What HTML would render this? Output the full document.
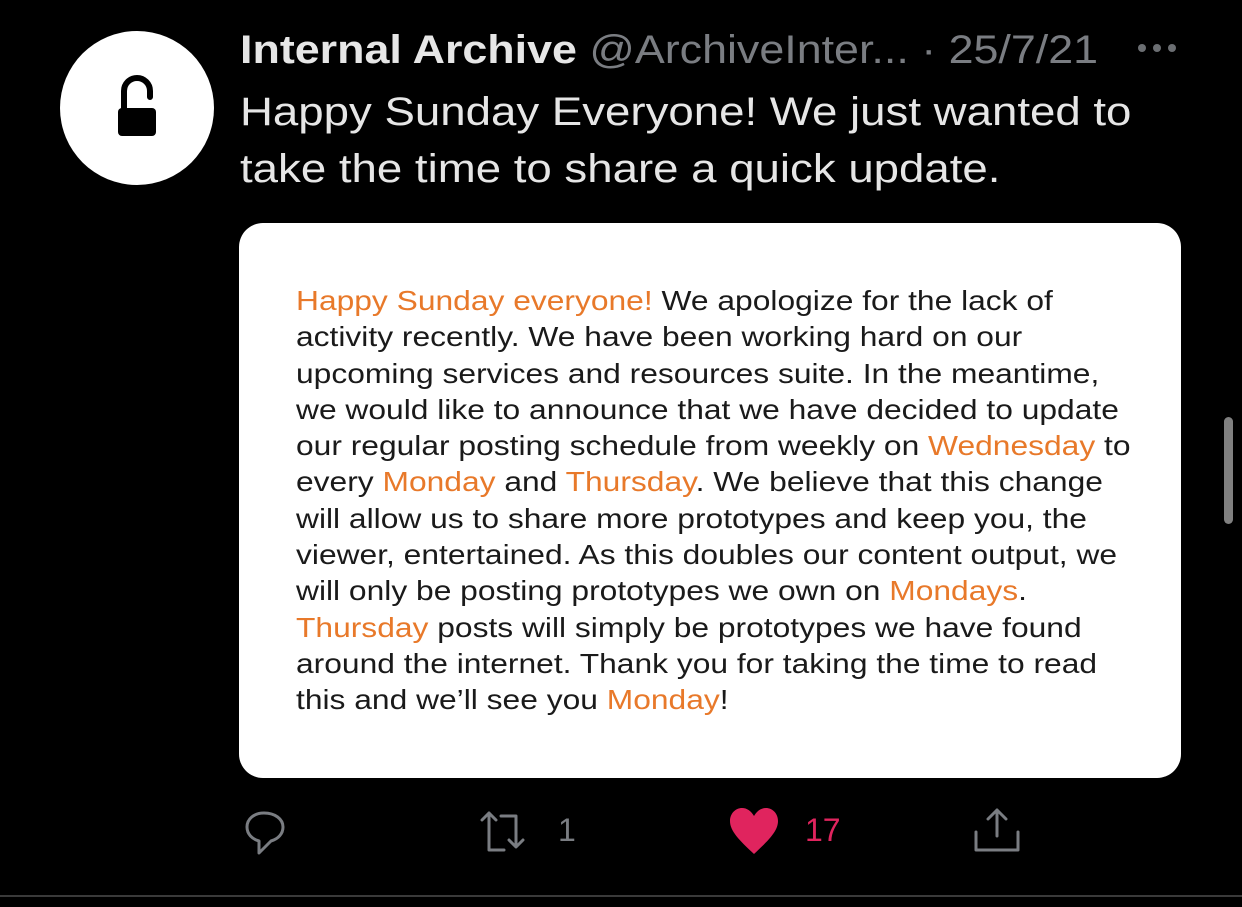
<!DOCTYPE html>
<html><head><meta charset="utf-8"><style>
html,body{margin:0;padding:0;background:#000;width:1242px;height:907px;overflow:hidden;font-family:"Liberation Sans",sans-serif;}
.abs{position:absolute;white-space:nowrap;}
.av{left:60px;top:31px;width:154px;height:154px;border-radius:50%;background:#fff;}
.name{left:240px;top:28px;font-size:40px;color:#e6e6e6;font-weight:bold;transform:scaleX(1.12);transform-origin:0 0;}
.handle{color:#7a7d82;font-weight:normal;}
.body{left:240px;top:84px;font-size:40px;line-height:57px;color:#e6e6e6;transform:scaleX(1.14);transform-origin:0 0;}
.card{left:239px;top:223px;width:942px;height:555px;background:#fff;border-radius:24px;}
.ct{left:296px;top:283px;font-size:27.5px;line-height:36.3px;color:#1a1a1a;transform:scaleX(1.155);transform-origin:0 0;}
.o{color:#e8792a;}
.sb{left:1224px;top:417px;width:9px;height:107px;border-radius:5px;background:#808080;}
.sep{left:0;top:895px;width:1242px;height:2px;background:#3a3a3a;}
.num{font-size:32px;top:812px;}
</style></head><body>
<div class="abs av"><svg width="154" height="154" viewBox="0 0 154 154">
<path d="M64 77 V60 a13 13 0 0 1 26 0 V66" fill="none" stroke="#000" stroke-width="6" stroke-linecap="round"/>
<rect x="58" y="77" width="38" height="28" rx="4" fill="#000"/>
</svg></div>
<div class="abs name">Internal Archive <span class="handle">@ArchiveInter... · 25/7/21</span></div>
<div class="abs" style="left:1136px;top:40px;"><svg width="42" height="16"><circle cx="6" cy="8" r="4" fill="#6b6e72"/><circle cx="21" cy="8" r="4" fill="#6b6e72"/><circle cx="36" cy="8" r="4" fill="#6b6e72"/></svg></div>
<div class="abs body">Happy Sunday Everyone! We just wanted to<br>take the time to share a quick update.</div>
<div class="abs card"></div>
<div class="abs ct"><span class="o">Happy Sunday everyone!</span> We apologize for the lack of<br>activity recently. We have been working hard on our<br>upcoming services and resources suite. In the meantime,<br>we would like to announce that we have decided to update<br>our regular posting schedule from weekly on <span class="o">Wednesday</span> to<br>every <span class="o">Monday</span> and <span class="o">Thursday</span>. We believe that this change<br>will allow us to share more prototypes and keep you, the<br>viewer, entertained. As this doubles our content output, we<br>will only be posting prototypes we own on <span class="o">Mondays</span>.<br><span class="o">Thursday</span> posts will simply be prototypes we have found<br>around the internet. Thank you for taking the time to read<br>this and we’ll see you <span class="o">Monday</span>!</div>
<div class="abs sb"></div>
<div class="abs" style="left:240px;top:808px;"><svg width="50" height="50" viewBox="0 0 50 50"><path d="M24 5 C14 5 7 11 7 19 C7 26 12 31 19 33 L19 45 L31 33 C38 31 43 26 43 19 C43 11 35 5 24 5 Z" fill="none" stroke="#7a7d82" stroke-width="3" stroke-linejoin="round"/></svg></div>
<div class="abs" style="left:480px;top:808px;"><svg width="60" height="50" viewBox="0 0 60 50"><path d="M9 20 L9 42 L24 42 M2 12 L9 5 L16 12 M9 5 V20" fill="none" stroke="#7a7d82" stroke-width="3" stroke-linecap="round" stroke-linejoin="round"/><path d="M21 8 L36 8 L36 38 M29 32 L36 39 L43 32" fill="none" stroke="#7a7d82" stroke-width="3" stroke-linecap="round" stroke-linejoin="round"/></svg></div>
<div class="abs num" style="left:558px;color:#7a7d82;">1</div>
<div class="abs" style="left:727px;top:806px;"><svg width="54" height="50" viewBox="0 0 54 50"><path d="M27 48 C12 34 3 25 3 15 C3 7 9 2 15 2 C20 2 24 5 27 10 C30 5 34 2 39 2 C45 2 51 7 51 15 C51 25 42 34 27 48 Z" fill="#e0245e"/></svg></div>
<div class="abs num" style="left:805px;color:#e0245e;">17</div>
<div class="abs" style="left:970px;top:806px;"><svg width="54" height="50" viewBox="0 0 54 50"><path d="M27 30 V4 M18 13 L27 4 L36 13 M6 26 V44 H48 V26" fill="none" stroke="#7a7d82" stroke-width="3" stroke-linecap="round" stroke-linejoin="round"/></svg></div>
<div class="abs sep"></div>
</body></html>
